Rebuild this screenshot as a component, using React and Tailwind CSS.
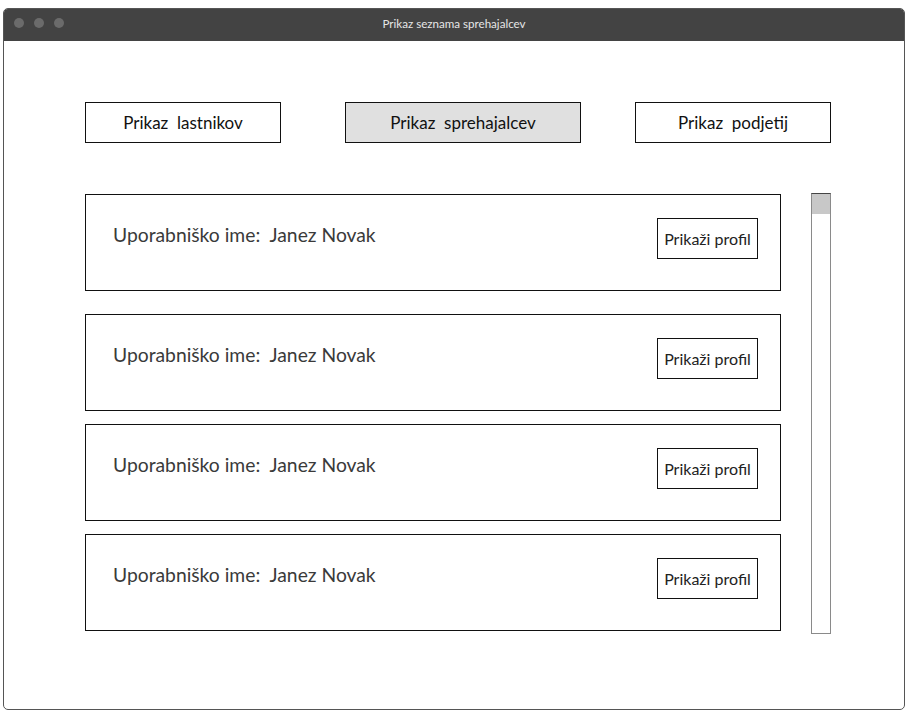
const walkers = [
  { id: 1, name: 'Janez Novak' },
  { id: 2, name: 'Janez Novak' },
  { id: 3, name: 'Janez Novak' },
  { id: 4, name: 'Janez Novak' },
]

const TopButton = ({ label, active, width }) => (
  <button
    className={`h-[41px] ${width} border border-[#111] text-[17px] text-[#111] whitespace-pre ${active ? 'bg-[#e0e0e0]' : 'bg-white'}`}
  >
    {label}
  </button>
)

const WalkerCard = ({ name }) => (
  <div className="h-[97px] border border-[#111] flex items-start justify-between pl-[27px] pr-[22px] pt-[23px]">
    <span className="mt-[3px] text-[19.3px] text-[#3a3a3a] whitespace-pre">Uporabniško ime:  {name}</span>
    <button className="w-[101px] h-[41px] border border-[#111] bg-white text-[16px] text-[#222]">
      Prikaži profil
    </button>
  </div>
)

export default function App() {
  return (
    <div className="w-[911px] h-[714px] bg-white pt-[8px] pl-[3px]" style={{ fontFamily: 'Lato, "Open Sans", sans-serif' }}>
      <div className="w-[902px] h-[702px] border border-[#555] rounded-[5px] overflow-hidden flex flex-col">
        {/* title bar */}
        <div className="h-[32px] bg-[#434343] relative flex items-center justify-center shrink-0">
          <div className="absolute left-[10px] top-[9px] flex gap-[10px]">
            <span className="w-[10px] h-[10px] rounded-full bg-[#6b6b6b]" />
            <span className="w-[10px] h-[10px] rounded-full bg-[#6b6b6b]" />
            <span className="w-[10px] h-[10px] rounded-full bg-[#6b6b6b]" />
          </div>
          <span className="text-[11.6px] text-[#e6e6e6] -mt-[2px]">Prikaz seznama sprehajalcev</span>
        </div>

        <div className="pl-[81px] pt-[61px]">
          {/* tabs */}
          <div className="w-[746px] flex justify-between">
            <TopButton label="Prikaz  lastnikov" width="w-[196px]" />
            <TopButton label="Prikaz  sprehajalcev" width="w-[236px] ml-[10px]" active />
            <TopButton label="Prikaz  podjetij" width="w-[196px]" />
          </div>

          {/* list + scrollbar */}
          <div className="mt-[50px] flex items-start">
            <div className="w-[696px] pt-[1px] flex flex-col">
              {walkers.map((w, i) => (
                <div key={w.id} className={i === 0 ? '' : i === 1 ? 'mt-[23px]' : 'mt-[13px]'}>
                  <WalkerCard name={w.name} />
                </div>
              ))}
            </div>
            <div className="ml-[30px] w-[20px] h-[441px] border border-[#8a8a8a] border-t-[#444]">
              <div className="h-[20px] bg-[#c8c8c8]" />
            </div>
          </div>
        </div>
      </div>
    </div>
  )
}
